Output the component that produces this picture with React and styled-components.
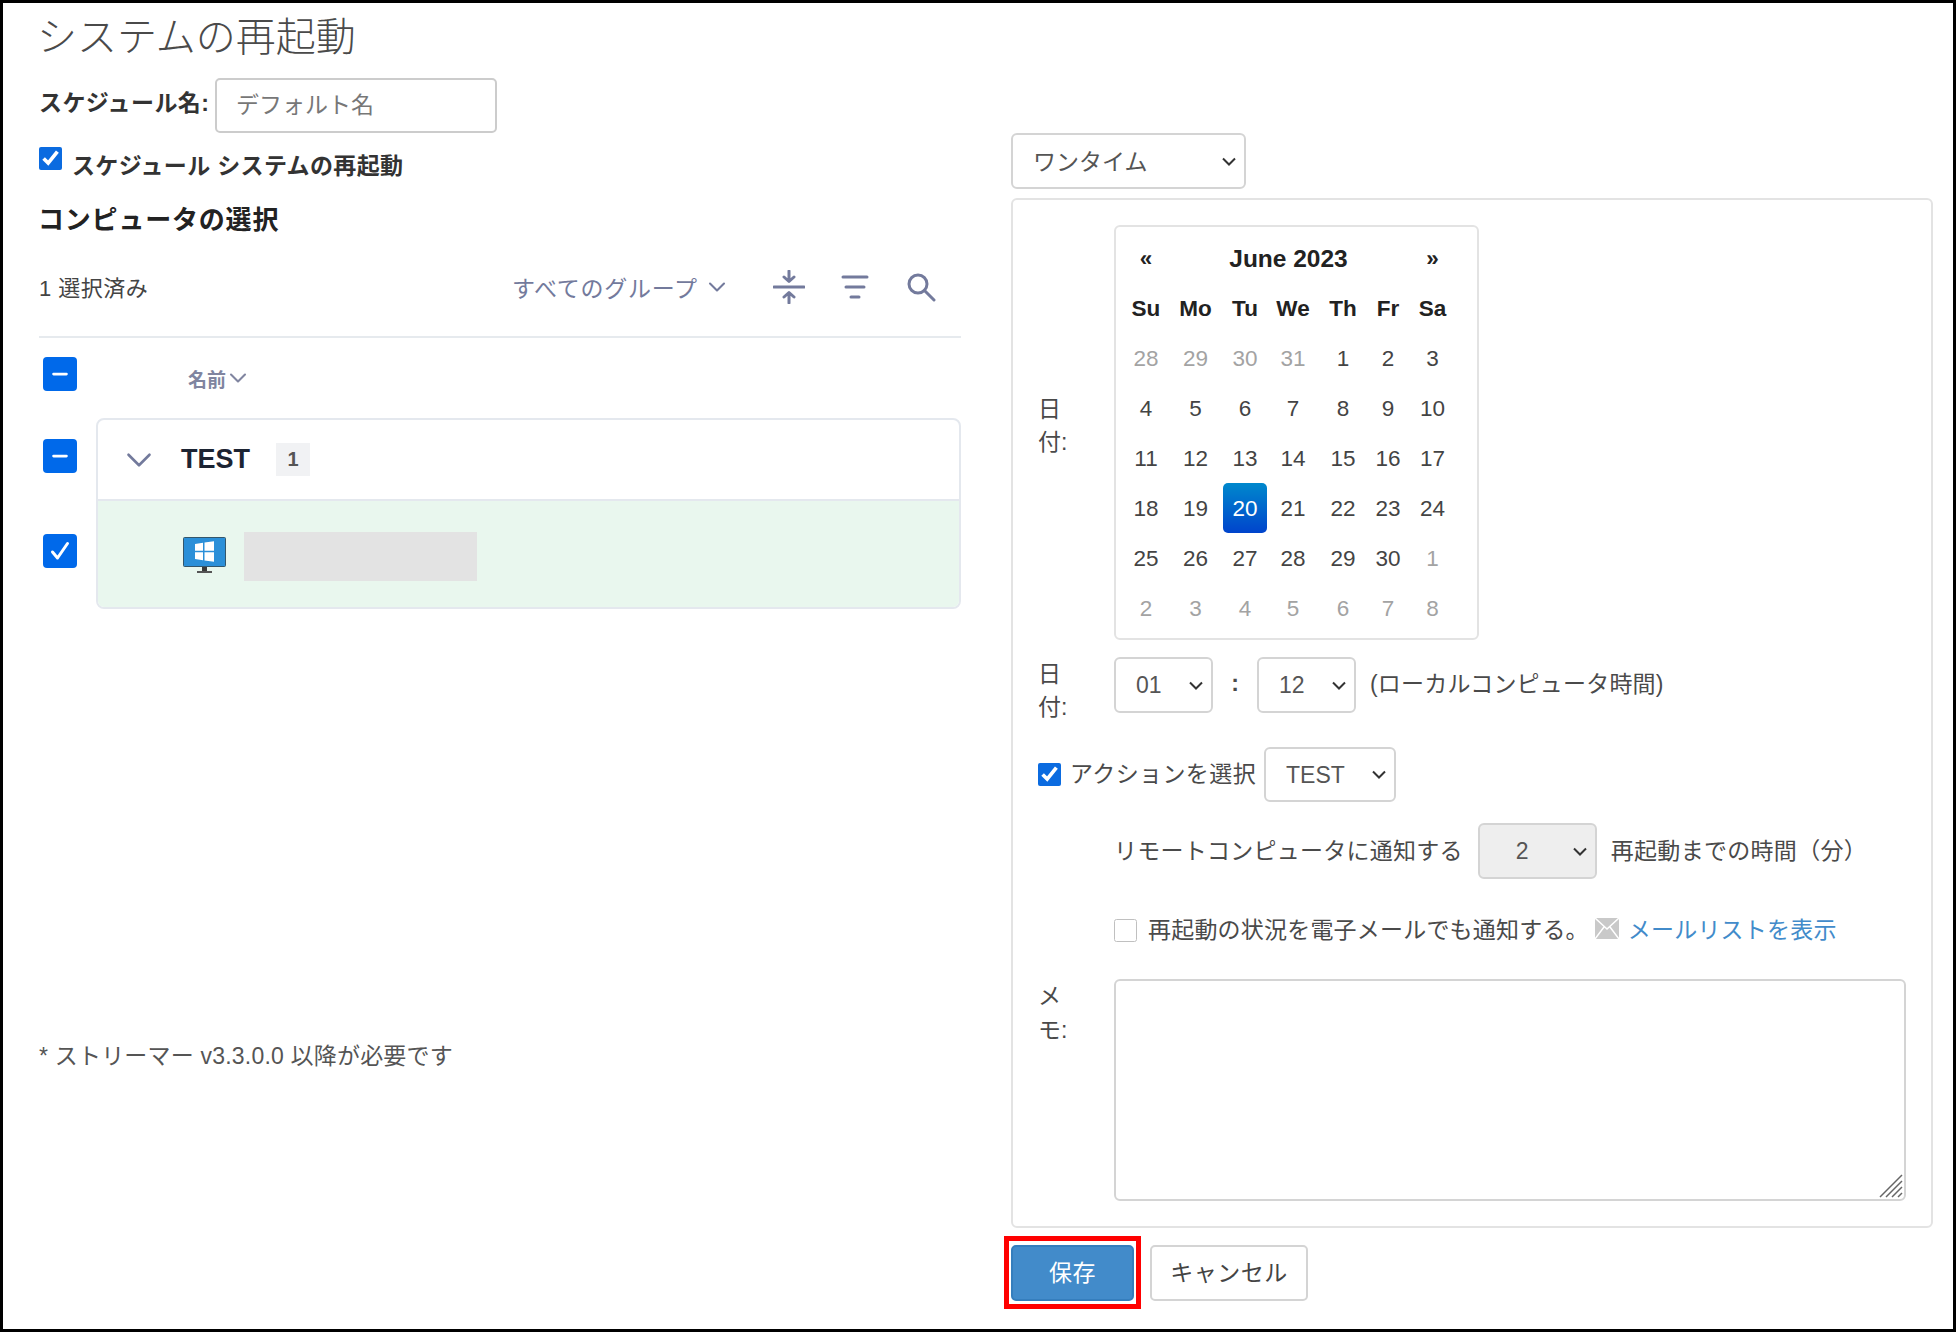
import React from 'react';
import styled, { createGlobalStyle } from 'styled-components';
import { ChevronDown, Minus } from 'lucide-react';

const GlobalS = createGlobalStyle`
  html, body { margin: 0; padding: 0; background: #fff; }
  body {
    font-family: "Liberation Sans", "Noto Sans CJK JP", sans-serif;
    font-size: 23px;
    color: #4a4a4a;
  }
  * { box-sizing: border-box; }
`;

const FrameS = styled.div`
  width: 1956px;
  height: 1332px;
  border: 3px solid #000;
  padding-left: 36px;
  display: grid;
  grid-template-columns: 922px 922px;
  column-gap: 50px;
`;

const LeftS = styled.div``;
const RightS = styled.div`
  padding-top: 130px;
`;

const TitleS = styled.h1`
  margin: 0 0 0 -2px;
  height: 68px;
  line-height: 68px;
  font-size: 40px;
  font-weight: 300;
  color: #4a4a4a;
`;

const NameRowS = styled.div`
  margin-top: 7px;
  height: 55px;
  display: flex;
  align-items: center;
`;

const NameLabelS = styled.label`
  width: 176px;
  margin-top: -10px;
  font-weight: 700;
  font-size: 23px;
  letter-spacing: 0.4px;
  color: #333;
`;

const NameInputS = styled.input`
  width: 282px;
  height: 55px;
  padding: 0 19px;
  border: 2px solid #ccc;
  border-radius: 5px;
  font: inherit;
  color: #666;
  &::placeholder { color: #777; }
`;

const ScheduleRowS = styled.div`
  margin-top: 14px;
  height: 34px;
  display: flex;
  align-items: flex-start;
`;

const NativeCheckS = styled.input.attrs({ type: 'checkbox' })`
  margin: 0;
  width: 23px;
  height: 23px;
  flex: none;
  accent-color: #0b6be0;
  opacity: ${(p) => (p.$faint ? 0.45 : 1)};
`;

const ScheduleLabelS = styled.label`
  margin: 4px 0 0 10px;
  line-height: 30px;
  font-weight: 700;
  font-size: 23px;
  letter-spacing: 0.35px;
  color: #333;
`;

const HeadingS = styled.h2`
  margin: 22px 0 0 -1px;
  height: 34px;
  line-height: 34px;
  font-size: 26px;
  font-weight: 700;
  letter-spacing: 0.8px;
  color: #222;
`;

const ToolbarS = styled.div`
  margin-top: 20px;
  height: 81px;
  padding: 0 7px 20px 0;
  border-bottom: 2px solid #e6eaee;
  display: flex;
  align-items: center;
`;

const SelectedS = styled.div`
  flex: 1;
  font-size: 22px;
  letter-spacing: 0.5px;
  color: #444;
  margin-top: -1px;
`;

const GroupFilterS = styled.div`
  display: flex;
  align-items: center;
  width: 244px;
  font-size: 23px;
  letter-spacing: 0.7px;
  color: #737a9c;
`;

const ToolIconS = styled.span`
  display: flex;
  justify-content: center;
  width: 66px;
  color: #737a9c;
`;

const TableHeadS = styled.div`
  height: 80px;
  padding-top: 19px;
  display: flex;
  align-items: flex-start;
`;

const BoxS = styled.span`
  flex: none;
  width: 34px;
  height: 34px;
  margin-left: 4px;
  margin-top: ${(p) => p.$top || 0}px;
  border-radius: 4px;
  background: #0069ea;
  color: #fff;
  display: flex;
  align-items: center;
  justify-content: center;
`;

const ColNameS = styled.span`
  margin: 7px 0 0 111px;
  display: flex;
  align-items: center;
  font-size: 19px;
  font-weight: 700;
  color: #8085a0;
`;

const GroupS = styled.div`
  display: grid;
  grid-template-columns: 57px 865px;
`;

const ChecksS = styled.div`
  display: flex;
  flex-direction: column;
`;

const CardS = styled.div`
  border: 2px solid #e4e8ee;
  border-radius: 8px;
  overflow: hidden;
`;

const CardHeadS = styled.div`
  height: 81px;
  padding-left: 20px;
  border-bottom: 2px solid #e4e8ee;
  display: flex;
  align-items: center;
  color: #737a9c;
`;

const GroupNameS = styled.span`
  margin-left: 21px;
  font-size: 27px;
  font-weight: 700;
  color: #1c2433;
`;

const BadgeS = styled.span`
  margin-left: 26px;
  width: 34px;
  height: 33px;
  background: #f1f2f4;
  display: flex;
  align-items: center;
  justify-content: center;
  font-size: 20px;
  font-weight: 700;
  color: #555;
`;

const CardBodyS = styled.div`
  height: 106px;
  padding: 31px 0 0 85px;
  background: #e9f7ee;
  display: flex;
  align-items: flex-start;
  gap: 18px;
`;

const RedactS = styled.div`
  width: 233px;
  height: 49px;
  background: #e3e3e3;
`;

const NoteS = styled.div`
  margin-top: 430px;
  line-height: 34px;
  font-size: 23px;
  letter-spacing: 0.2px;
  color: #555;
`;

const SelectS = styled.select`
  width: ${(p) => p.$w}px;
  height: ${(p) => p.$h || 56}px;
  padding: ${(p) => p.$top || 0}px 10px 0 ${(p) => p.$pad || 20}px;
  border: 2px solid #d4d4d4;
  border-radius: 6px;
  appearance: none;
  background-color: #fff;
  background-image: url("data:image/svg+xml,%3Csvg xmlns='http://www.w3.org/2000/svg' width='14' height='9' fill='none' stroke='%23333' stroke-width='2'%3E%3Cpath d='M1 1.500l6 6 6-6'/%3E%3C/svg%3E");
  background-repeat: no-repeat;
  background-position: right 8px center;
  font: inherit;
  color: #555;
  flex: none;
  &:disabled {
    background-color: #eee;
    color: #555;
    opacity: 1;
  }
`;

const PanelS = styled.div`
  margin-top: 9px;
  padding: 25px 25px 25px;
  border: 2px solid #e3e3e3;
  border-radius: 6px;
`;

const RowS = styled.div`
  display: flex;
  align-items: ${(p) => p.$align || 'flex-start'};
  height: ${(p) => (p.$height ? `${p.$height}px` : 'auto')};
  margin-top: ${(p) => p.$top || 0}px;
  padding-left: ${(p) => p.$indent || 0}px;
`;

const FieldLabelS = styled.div`
  width: 76px;
  flex: none;
  padding-right: 40px;
  padding-top: ${(p) => p.$top || 0}px;
  padding-bottom: ${(p) => p.$bottom || 0}px;
  line-height: ${(p) => p.$line || 33}px;
  align-self: ${(p) => p.$self || 'auto'};
  color: #4a4a4a;
`;

const CalendarS = styled.div`
  width: 365px;
  padding: 6px 0 5px 6px;
  border: 2px solid #e3e3e3;
  border-radius: 6px;
  display: grid;
  grid-template-columns: 48px 51px 48px 48px 52px 38px 51px;
  grid-auto-rows: 50px;
  font-size: 22.5px;
`;

const CalNavS = styled.div`
  display: flex;
  align-items: center;
  justify-content: center;
  padding-top: 2px;
  font-weight: 700;
  color: #222;
`;

const CalTitleS = styled(CalNavS)`
  grid-column: span 5;
  font-size: 24.5px;
`;

const DayNameS = styled(CalNavS)``;

const DayS = styled.div`
  display: flex;
  align-items: center;
  justify-content: center;
  padding-top: 2px;
  color: ${(p) => (p.$muted ? '#a3a3a3' : '#444')};
  ${(p) =>
    p.$active &&
    `
    margin: 0 2px;
    border-radius: 5px;
    color: #fff;
    background: linear-gradient(to bottom, #0088cc, #0044cc);
  `}
`;

const ColonS = styled.span`
  width: 44px;
  text-align: center;
  font-weight: 700;
  line-height: 52px;
`;

const InlineTextS = styled.span`
  margin-left: ${(p) => p.$left || 0}px;
  margin-right: ${(p) => p.$right || 0}px;
  padding-bottom: 5px;
  color: ${(p) => p.$color || '#4a4a4a'};
  letter-spacing: ${(p) => p.$spacing || 0}px;
  line-height: ${(p) => p.$line || 'normal'};
  white-space: nowrap;
`;

const MailIconS = styled.svg`
  flex: none;
  margin: 0 9px 4px 6px;
`;

const MemoWrapS = styled.div`
  position: relative;
  width: 792px;
  height: 222px;
`;

const MemoS = styled.textarea`
  display: block;
  width: 100%;
  height: 100%;
  border: 2px solid #d4d4d4;
  border-radius: 6px;
  resize: none;
  font: inherit;
`;

const GripS = styled.svg`
  position: absolute;
  right: 3px;
  bottom: 3px;
  pointer-events: none;
`;

const ActionsS = styled.div`
  margin-top: 17px;
  display: flex;
  gap: 15px;
`;

const SaveFrameS = styled.div`
  margin: -9px -6px -8px -7px;
  padding: 4px 2px 3px;
  border: 5px solid #f00;
`;

const ButtonS = styled.button`
  display: block;
  height: 56px;
  width: ${(p) => p.$w}px;
  padding: 0 0 4px;
  border: 2px solid ${(p) => (p.$primary ? '#357ebd' : '#d4d4d4')};
  border-radius: 5px;
  background: ${(p) => (p.$primary ? '#428bca' : '#fff')};
  color: ${(p) => (p.$primary ? '#fff' : '#444')};
  font: inherit;
  letter-spacing: 0.5px;
`;

const CompressIcon = () => (
  <svg width="32" height="34" viewBox="0 0 32 34" fill="none" stroke="currentColor" strokeWidth="3" strokeLinecap="round" strokeLinejoin="round">
    <path d="M1 17h30" />
    <path d="M16 1v10M11 7l5 4.500 5-4.500" />
    <path d="M16 33V23M11 27l5-4.500 5 4.500" />
  </svg>
);

const FilterIcon = () => (
  <svg width="28" height="24" viewBox="0 0 28 24" fill="none" stroke="currentColor" strokeWidth="3" strokeLinecap="round">
    <path d="M2 2h24M5 12h18M10 22h8" />
  </svg>
);

const SearchIcon = () => (
  <svg width="30" height="30" viewBox="0 0 30 30" fill="none" stroke="currentColor" strokeWidth="3" strokeLinecap="round">
    <circle cx="12" cy="12" r="9" />
    <path d="M18.500 18.500L28 28" />
  </svg>
);

const CheckMark = () => (
  <svg width="20" height="20" viewBox="0 0 20 20" fill="none" stroke="currentColor" strokeWidth="3" strokeLinecap="round" strokeLinejoin="round">
    <path d="M2.500 11l5 6L17.500 2.500" />
  </svg>
);

const MonitorIcon = () => (
  <svg width="43" height="37" viewBox="0 0 43 37" style={{ marginTop: 5, flex: 'none' }}>
    <rect x="0.500" y="0.500" width="42" height="29" rx="1" fill="#2b8fd8" stroke="#33566b" />
    <path d="M12 7l8-1.200v8H12zM21.500 5.600L31 4.200v9.600h-9.500zM12 15.200h8v8L12 22zM21.500 15.200H31v9.600l-9.500-1.400z" fill="#fff" />
    <path d="M19 30h5v4h-5z" fill="#3a3a3a" />
    <path d="M14 34h15v2H14z" fill="#555" />
  </svg>
);

const weeks = [
  ['28', '29', '30', '31', '1', '2', '3'],
  ['4', '5', '6', '7', '8', '9', '10'],
  ['11', '12', '13', '14', '15', '16', '17'],
  ['18', '19', '20', '21', '22', '23', '24'],
  ['25', '26', '27', '28', '29', '30', '1'],
  ['2', '3', '4', '5', '6', '7', '8'],
];

const isMuted = (w, d) => (w === 0 && d < 4) || (w === 4 && d === 6) || w === 5;

const App = () => {
  return (
    <FrameS>
      <GlobalS />
      <LeftS>
        <TitleS>システムの再起動</TitleS>
        <NameRowS>
          <NameLabelS>スケジュール名:</NameLabelS>
          <NameInputS placeholder="デフォルト名" />
        </NameRowS>
        <ScheduleRowS>
          <NativeCheckS defaultChecked />
          <ScheduleLabelS>スケジュール システムの再起動</ScheduleLabelS>
        </ScheduleRowS>
        <HeadingS>コンピュータの選択</HeadingS>
        <ToolbarS>
          <SelectedS>1 選択済み</SelectedS>
          <GroupFilterS>
            すべてのグループ
            <ChevronDown size={28} strokeWidth={1.8} style={{ marginLeft: 5 }} />
          </GroupFilterS>
          <ToolIconS>
            <CompressIcon />
          </ToolIconS>
          <ToolIconS>
            <FilterIcon />
          </ToolIconS>
          <ToolIconS>
            <SearchIcon />
          </ToolIconS>
        </ToolbarS>
        <TableHeadS>
          <BoxS>
            <Minus size={22} strokeWidth={3} />
          </BoxS>
          <ColNameS>
            名前
            <ChevronDown size={28} strokeWidth={1.8} style={{ marginLeft: -2 }} />
          </ColNameS>
        </TableHeadS>
        <GroupS>
          <ChecksS>
            <BoxS $top={21}>
              <Minus size={22} strokeWidth={3} />
            </BoxS>
            <BoxS $top={61}>
              <CheckMark />
            </BoxS>
          </ChecksS>
          <CardS>
            <CardHeadS>
              <ChevronDown size={42} strokeWidth={1.5} />
              <GroupNameS>TEST</GroupNameS>
              <BadgeS>1</BadgeS>
            </CardHeadS>
            <CardBodyS>
              <MonitorIcon />
              <RedactS />
            </CardBodyS>
          </CardS>
        </GroupS>
        <NoteS>* ストリーマー v3.3.0.0 以降が必要です</NoteS>
      </LeftS>
      <RightS>
        <SelectS $w={235} $top={2} defaultValue="once">
          <option value="once">ワンタイム</option>
        </SelectS>
        <PanelS>
          <RowS>
            <FieldLabelS $self="center" $bottom={14}>
              日付:
            </FieldLabelS>
            <CalendarS>
              <CalNavS>«</CalNavS>
              <CalTitleS>June 2023</CalTitleS>
              <CalNavS>»</CalNavS>
              {['Su', 'Mo', 'Tu', 'We', 'Th', 'Fr', 'Sa'].map((d) => (
                <DayNameS key={d}>{d}</DayNameS>
              ))}
              {weeks.map((week, w) =>
                week.map((day, d) => (
                  <DayS key={`${w}-${d}`} $muted={isMuted(w, d)} $active={w === 3 && d === 2}>
                    {day}
                  </DayS>
                ))
              )}
            </CalendarS>
          </RowS>
          <RowS $top={17}>
            <FieldLabelS $top={1}>日付:</FieldLabelS>
            <SelectS $w={99} defaultValue="01">
              <option value="01">01</option>
            </SelectS>
            <ColonS>:</ColonS>
            <SelectS $w={99} defaultValue="12">
              <option value="12">12</option>
            </SelectS>
            <InlineTextS $left={14} $spacing={0.2} $line="54px">
              (ローカルコンピュータ時間)
            </InlineTextS>
          </RowS>
          <RowS $top={23} $align="center">
            <NativeCheckS defaultChecked />
            <InlineTextS $left={9} $right={8} $spacing={0.4}>
              アクションを選択
            </InlineTextS>
            <SelectS $w={132} $h={55} defaultValue="TEST">
              <option value="TEST">TEST</option>
            </SelectS>
          </RowS>
          <RowS $top={21} $indent={76} $align="center">
            <InlineTextS $right={15} $spacing={0.25}>
              リモートコンピュータに通知する
            </InlineTextS>
            <SelectS $w={119} $pad={36} disabled defaultValue="2">
              <option value="2">2</option>
            </SelectS>
            <InlineTextS $left={14} $spacing={0.3}>
              再起動までの時間（分）
            </InlineTextS>
          </RowS>
          <RowS $top={35} $indent={76} $align="center" $height={32}>
            <NativeCheckS $faint />
            <InlineTextS $left={11} $spacing={0.2}>
              再起動の状況を電子メールでも通知する。
            </InlineTextS>
            <MailIconS width="24" height="21" viewBox="0 0 24 21">
              <rect width="24" height="21" fill="#c9c9c9" />
              <path d="M0 0l12 11L24 0M0 21l9-12M24 21l-9-12" fill="none" stroke="#fff" strokeWidth="1.500" />
            </MailIconS>
            <InlineTextS $color="#428bca" $spacing={0.2}>
              メールリストを表示
            </InlineTextS>
          </RowS>
          <RowS $top={33}>
            <FieldLabelS $line={34}>メモ:</FieldLabelS>
            <MemoWrapS>
              <MemoS />
              <GripS width="24" height="24" viewBox="0 0 24 24" stroke="#666" strokeWidth="1.500">
                <path d="M1 23L23 1M7 23L23 7M13 23l10-10M19 23l4-4" />
              </GripS>
            </MemoWrapS>
          </RowS>
        </PanelS>
        <ActionsS>
          <SaveFrameS>
            <ButtonS $primary $w={123}>
              保存
            </ButtonS>
          </SaveFrameS>
          <ButtonS $w={158}>キャンセル</ButtonS>
        </ActionsS>
      </RightS>
    </FrameS>
  );
};

export default App;
